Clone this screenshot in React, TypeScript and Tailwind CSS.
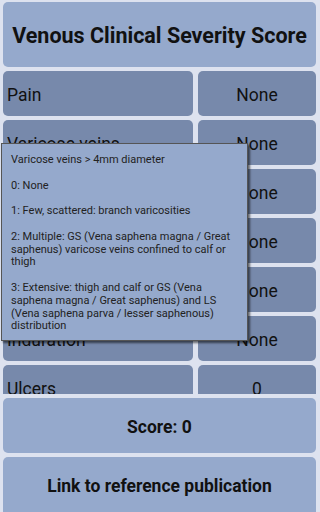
const rows: { label: string; value: string }[] = [
  { label: "Pain", value: "None" },
  { label: "Varicose veins", value: "None" },
  { label: "Edema", value: "None" },
  { label: "Pigmentation", value: "None" },
  { label: "Inflammation", value: "None" },
  { label: "Induration", value: "None" },
  { label: "Ulcers", value: "0" },
  { label: "Ulcer duration", value: "None" },
];

const tooltipLines = [
  "Varicose veins > 4mm diameter",
  "0: None",
  "1: Few, scattered: branch varicosities",
  "2: Multiple: GS (Vena saphena magna / Great saphenus) varicose veins confined to calf or thigh",
  "3: Extensive: thigh and calf or GS (Vena saphena magna / Great saphenus) and LS (Vena saphena parva / lesser saphenous) distribution",
];

export default function App() {
  return (
    <div
      className="relative w-[320px] h-[512px] overflow-hidden bg-[#dde2ef] flex flex-col gap-[4px] pl-[3px] pr-[4px] pt-[2px] text-[#111]"
      style={{ fontFamily: "Roboto, 'Liberation Sans', sans-serif" }}
    >
      <div className="h-[65px] shrink-0 rounded-[5px] bg-[#95a9cc] flex items-center justify-center pt-[3px]">
        <h1 className="text-[21.5px] font-bold whitespace-nowrap">Venous Clinical Severity Score</h1>
      </div>

      <div className="h-[323px] shrink-0 overflow-hidden">
        <div className="grid grid-cols-[190px_1fr] gap-x-[5px] gap-y-[4px]">
          {rows.map((r) => (
            <div key={r.label} className="contents">
              <div className="h-[45px] rounded-[5px] bg-[#7789ab] flex items-center pl-[4px] pt-[3px] text-[17.5px]">
                {r.label}
              </div>
              <div className="h-[45px] rounded-[5px] bg-[#7789ab] flex items-center justify-center pt-[3px] text-[17.5px]">
                {r.value}
              </div>
            </div>
          ))}
        </div>
      </div>

      <div className="h-[55px] shrink-0 rounded-[5px] bg-[#95a9cc] flex items-center justify-center pt-[3px] text-[17.5px] font-bold">
        Score: 0
      </div>
      <div className="h-[55px] shrink-0 rounded-t-[5px] bg-[#95a9cc] flex items-center justify-center pt-[3px] text-[17.5px] font-bold">
        Link to reference publication
      </div>

      <div className="absolute left-[1px] top-[143px] w-[247px] h-[198px] bg-[#95a9cc] border border-[#555] shadow-[2px_2px_2px_rgba(0,0,0,0.55)] px-[9px] pt-[10px] text-[11px] leading-[12.8px] text-[#222] flex flex-col gap-[12.8px]">
        {tooltipLines.map((t) => (
          <p key={t}>{t}</p>
        ))}
      </div>
    </div>
  );
}
